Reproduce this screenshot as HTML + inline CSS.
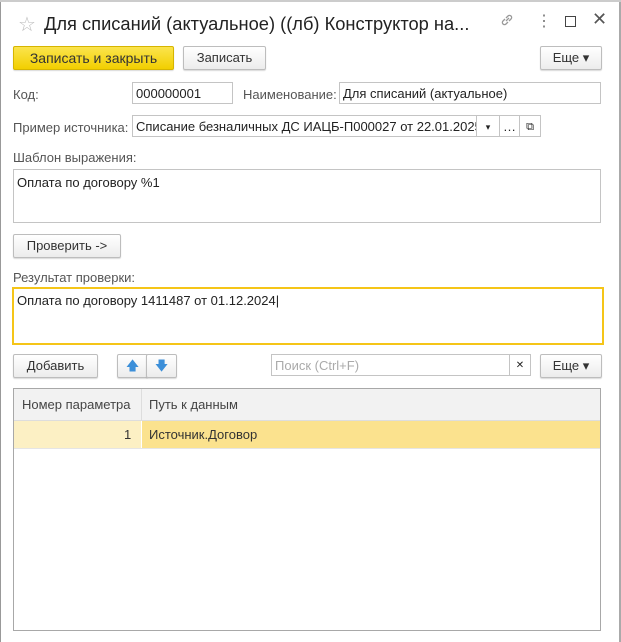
<html><head><style>
body{margin:0;width:621px;height:642px;background:#fff;position:relative;overflow:hidden;font-family:"Liberation Sans",sans-serif;font-size:13px;color:#333}
.a{position:absolute}
.btn{position:absolute;border:1px solid #bdbdbd;border-radius:2px;background:linear-gradient(#fff,#ececec);box-shadow:0 1px 1px rgba(0,0,0,.15);text-align:center;line-height:22px;height:22px;color:#333}
.inp{position:absolute;border:1px solid #c4c4c4;background:#fff;height:22px;line-height:22px;padding-left:3px;box-sizing:border-box;color:#222;white-space:nowrap;overflow:hidden}
.lbl{position:absolute;color:#555}
</style></head><body>
<div class="a" style="left:0;top:0;width:1px;height:642px;background:#999"></div>
<div class="a" style="left:619px;top:0;width:2px;height:642px;background:#aaa"></div>
<div class="a" style="left:0;top:0;width:621px;height:2px;background:#ccc"></div>
<div class="a" style="left:18px;top:12px;font-size:20px;color:#bbb">☆</div>
<div class="a" style="left:44px;top:13px;font-size:18.3px;color:#222">Для списаний (актуальное) ((лб) Конструктор на...</div>
<svg class="a" style="left:499px;top:12px" width="16" height="16" viewBox="0 0 16 16" fill="none" stroke="#999" stroke-width="1.3"><path d="M7 9l3-3M6 7L4 9a2 2 0 003 3l2-2M10 9l2-2a2 2 0 00-3-3L7 6"/></svg>
<div class="a" style="left:536px;top:11px;font-size:16px;color:#777">⋮</div>
<div class="a" style="left:565px;top:16px;width:9px;height:9px;border:1px solid #444"></div>
<div class="a" style="left:592px;top:9px;font-size:18px;color:#555">✕</div>
<div class="btn" style="left:13px;top:46px;width:159px;background:linear-gradient(#fbe44d,#f2cf00);border-color:#d6b500;color:#333;font-size:14px">Записать и закрыть</div>
<div class="btn" style="left:183px;top:46px;width:81px">Записать</div>
<div class="btn" style="left:540px;top:46px;width:60px">Еще ▾</div>
<div class="lbl" style="left:13px;top:87px">Код:</div>
<div class="inp" style="left:132px;top:82px;width:101px">000000001</div>
<div class="lbl" style="left:243px;top:87px">Наименование:</div>
<div class="inp" style="left:339px;top:82px;width:262px">Для списаний (актуальное)</div>
<div class="lbl" style="left:13px;top:120px">Пример источника:</div>
<div class="inp" style="left:132px;top:115px;width:345px">Списание безналичных ДС ИАЦБ-П000027 от 22.01.2025</div>
<div class="inp" style="left:476px;top:115px;width:24px;text-align:center;padding:0;font-size:9px">▾</div>
<div class="inp" style="left:499px;top:115px;width:21px;text-align:center;padding:0">…</div>
<div class="inp" style="left:519px;top:115px;width:22px;text-align:center;padding:0;font-size:11px">⧉</div>
<div class="lbl" style="left:13px;top:150px">Шаблон выражения:</div>
<div class="inp" style="left:13px;top:169px;width:588px;height:54px;line-height:normal;padding:5px 3px">Оплата по договору %1</div>
<div class="btn" style="left:13px;top:234px;width:106px">Проверить -&gt;</div>
<div class="lbl" style="left:13px;top:270px">Результат проверки:</div>
<div class="inp" style="left:12px;top:287px;width:592px;height:58px;border:2px solid #f5c518;line-height:normal;padding:4px 3px">Оплата по договору 1411487 от 01.12.2024|</div>
<div class="btn" style="left:13px;top:354px;width:83px">Добавить</div>
<div class="btn" style="left:117px;top:354px;width:29px;color:#3c8fd9">🡅</div>
<div class="btn" style="left:146px;top:354px;width:29px;color:#3c8fd9">🡇</div>
<div class="inp" style="left:271px;top:354px;width:239px;color:#aaa">Поиск (Ctrl+F)</div>
<div class="inp" style="left:509px;top:354px;width:22px;text-align:center;padding:0;font-size:10px">✕</div>
<div class="btn" style="left:540px;top:354px;width:60px">Еще ▾</div>
<div class="a" style="left:13px;top:388px;width:586px;height:241px;border:1px solid #a8a8a8"></div>
<div class="a" style="left:14px;top:389px;width:586px;height:31px;background:#f2f2f2;border-bottom:1px solid #ddd"></div>
<div class="a" style="left:141px;top:389px;width:1px;height:31px;background:#ddd"></div>
<div class="lbl" style="left:22px;top:397px;color:#444">Номер параметра</div>
<div class="lbl" style="left:149px;top:397px;color:#444">Путь к данным</div>
<div class="a" style="left:14px;top:421px;width:127px;height:27px;background:#fcf0c4"></div>
<div class="a" style="left:142px;top:421px;width:458px;height:27px;background:#fbe28e"></div>
<div class="a" style="left:14px;top:448px;width:586px;height:1px;background:#e5e5e5"></div>
<div class="a" style="left:124px;top:427px;color:#333">1</div>
<div class="a" style="left:149px;top:427px;color:#333">Источник.Договор</div>
</body></html>
